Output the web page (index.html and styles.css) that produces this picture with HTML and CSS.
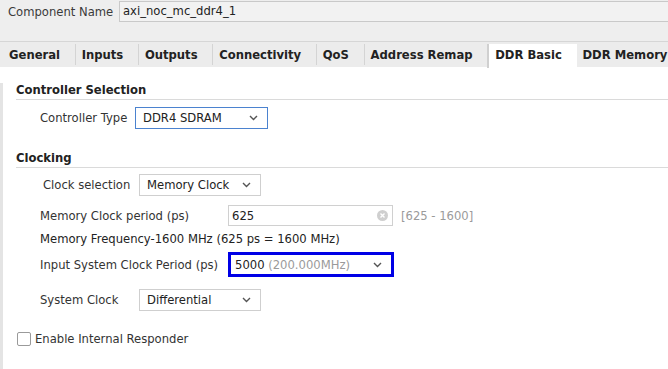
FILE: index.html
```html
<!DOCTYPE html>
<html lang="en">
<head>
    <meta charset="UTF-8">
    <title>DDR Basic</title>
    <link rel="stylesheet" href="styles.css">
</head>
<body>
    <div class="top-bar">
        <span class="top-label">Component Name</span>
        <div class="name-input">axi_noc_mc_ddr4_1</div>
    </div>
    <div class="tab-bar">
        <div class="tab">General</div>
        <div class="tab">Inputs</div>
        <div class="tab">Outputs</div>
        <div class="tab">Connectivity</div>
        <div class="tab">QoS</div>
        <div class="tab">Address Remap</div>
        <div class="tab active">DDR Basic</div>
        <div class="tab last">DDR Memory</div>
    </div>
    <div class="panel">
        <h3 class="section-title first">Controller Selection</h3>
        <div class="row row-ctrl">
            <span class="lbl lbl-ctrl">Controller Type</span>
            <div class="combo combo-ctrl focused">
                <span>DDR4 SDRAM</span>
                <svg class="chev" width="9" height="6" viewBox="0 0 9 6"><polyline points="1,1 4.5,4.5 8,1" fill="none" stroke="#555" stroke-width="1.4"/></svg>
            </div>
        </div>

        <h3 class="section-title">Clocking</h3>
        <div class="row row-clksel">
            <span class="lbl lbl-clksel">Clock selection</span>
            <div class="combo combo-small">
                <span>Memory Clock</span>
                <svg class="chev" width="9" height="6" viewBox="0 0 9 6"><polyline points="1,1 4.5,4.5 8,1" fill="none" stroke="#555" stroke-width="1.4"/></svg>
            </div>
        </div>
        <div class="row row-period">
            <span class="lbl lbl-wide">Memory Clock period (ps)</span>
            <div class="text-field">
                <span>625</span>
                <svg class="clear" width="11" height="11" viewBox="0 0 11 11"><circle cx="5.5" cy="5.5" r="5.5" fill="#cfcfcf"/><path d="M3.5 3.5 L7.5 7.5 M7.5 3.5 L3.5 7.5" stroke="#fff" stroke-width="1.4"/></svg>
            </div>
            <span class="range">[625 - 1600]</span>
        </div>
        <div class="row row-freq">Memory Frequency-1600 MHz (625 ps = 1600 MHz)</div>
        <div class="row row-input">
            <span class="lbl lbl-wide">Input System Clock Period (ps)</span>
            <div class="combo combo-hl">
                <span>5000 <span class="muted">(200.000MHz)</span></span>
                <svg class="chev" width="9" height="6" viewBox="0 0 9 6"><polyline points="1,1 4.5,4.5 8,1" fill="none" stroke="#555" stroke-width="1.4"/></svg>
            </div>
        </div>
        <div class="row row-sys">
            <span class="lbl lbl-sys">System Clock</span>
            <div class="combo combo-small">
                <span>Differential</span>
                <svg class="chev" width="9" height="6" viewBox="0 0 9 6"><polyline points="1,1 4.5,4.5 8,1" fill="none" stroke="#555" stroke-width="1.4"/></svg>
            </div>
        </div>
        <label class="check-row">
            <span class="checkbox"></span>
            <span>Enable Internal Responder</span>
        </label>
    </div>
</body>
</html>
```

FILE: styles.css
```css
body {
    margin: 0;
    font-family: "DejaVu Sans", sans-serif;
    font-size: 11.6px;
    color: #333;
    background: #fff;
    overflow: hidden;
}
.top-bar {
    display: flex;
    align-items: center;
    background: #eeeeee;
    padding: 1px 0 19px 8px;
}
.top-label {
    width: 111px;
    color: #3a3a3a;
}
.name-input {
    flex: 1;
    height: 19px;
    line-height: 19px;
    padding-left: 3px;
    background: #f2f2f2;
    border: 1px solid #c9c9c9;
    border-right: none;
    color: #222;
}
.tab-bar {
    display: flex;
    height: 25px;
    background: #ececec;
    border-top: 1px solid #d6d6d6;
    white-space: nowrap;
}
.tab {
    margin-top: 2px;
    height: 21px;
    line-height: 22px;
    padding: 0 14.67px 0 6px;
    font-weight: bold;
    color: #222;
    border-right: 1px solid #d4d4d4;
}
.tab:first-child {
    padding-left: 9px;
}
.tab.active {
    height: 24px;
    background: #fff;
    border-left: 2px solid #d0d0d0;
    border-right: none;
    margin-left: -1px;
}
.tab.last {
    border-right: none;
}
.panel {
    border-left: 3px solid #e4e4e4;
    padding-left: 13px;
    height: 302px;
}
.section-title {
    margin: 22px 0 0;
    font-size: 11.6px;
    line-height: 14px;
    font-weight: bold;
    color: #222;
    padding-bottom: 2px;
    border-bottom: 1px solid #dadada;
}
.section-title.first {
    margin-top: 16px;
}
.row {
    display: flex;
    align-items: center;
    padding-left: 24px;
}
.lbl {
    flex: none;
}
.lbl-ctrl { width: 95px; }
.lbl-clksel { width: 96px; padding-left: 3px; }
.lbl-wide { width: 188px; }
.lbl-sys { width: 99px; }
.row-ctrl { margin-top: 7px; }
.row-clksel { margin-top: 6px; }
.row-period { margin-top: 9px; }
.row-freq { margin-top: 6px; line-height: 14px; color: #222; }
.row-input { margin-top: 6px; }
.row-sys { margin-top: 12px; }
.combo {
    display: flex;
    align-items: center;
    justify-content: space-between;
    box-sizing: border-box;
    height: 22px;
    padding: 0 9px 0 7px;
    border: 1px solid #cfcfcf;
    background: #fff;
    color: #222;
}
.combo.focused {
    border-color: #4b82cf;
}
.combo-ctrl { width: 133px; }
.combo-small { width: 122px; }
.combo-hl {
    width: 166px;
    height: 25px;
    border: 3px solid #0000e6;
    padding-left: 4px;
}
.chev {
    flex: none;
}
.muted, .range {
    color: #9a9a9a;
}
.text-field {
    display: flex;
    align-items: center;
    justify-content: space-between;
    box-sizing: border-box;
    width: 165px;
    height: 21px;
    padding: 0 4px 0 3px;
    border: 1px solid #d0d0d0;
    color: #222;
}
.range {
    margin-left: 8px;
}
.check-row {
    display: flex;
    align-items: center;
    margin-top: 21px;
    padding-left: 1px;
    line-height: 14px;
    color: #333;
}
.checkbox {
    width: 12px;
    height: 12px;
    border: 1px solid #9a9a9a;
    border-radius: 2px;
    margin-right: 4px;
    background: #fff;
}
```
